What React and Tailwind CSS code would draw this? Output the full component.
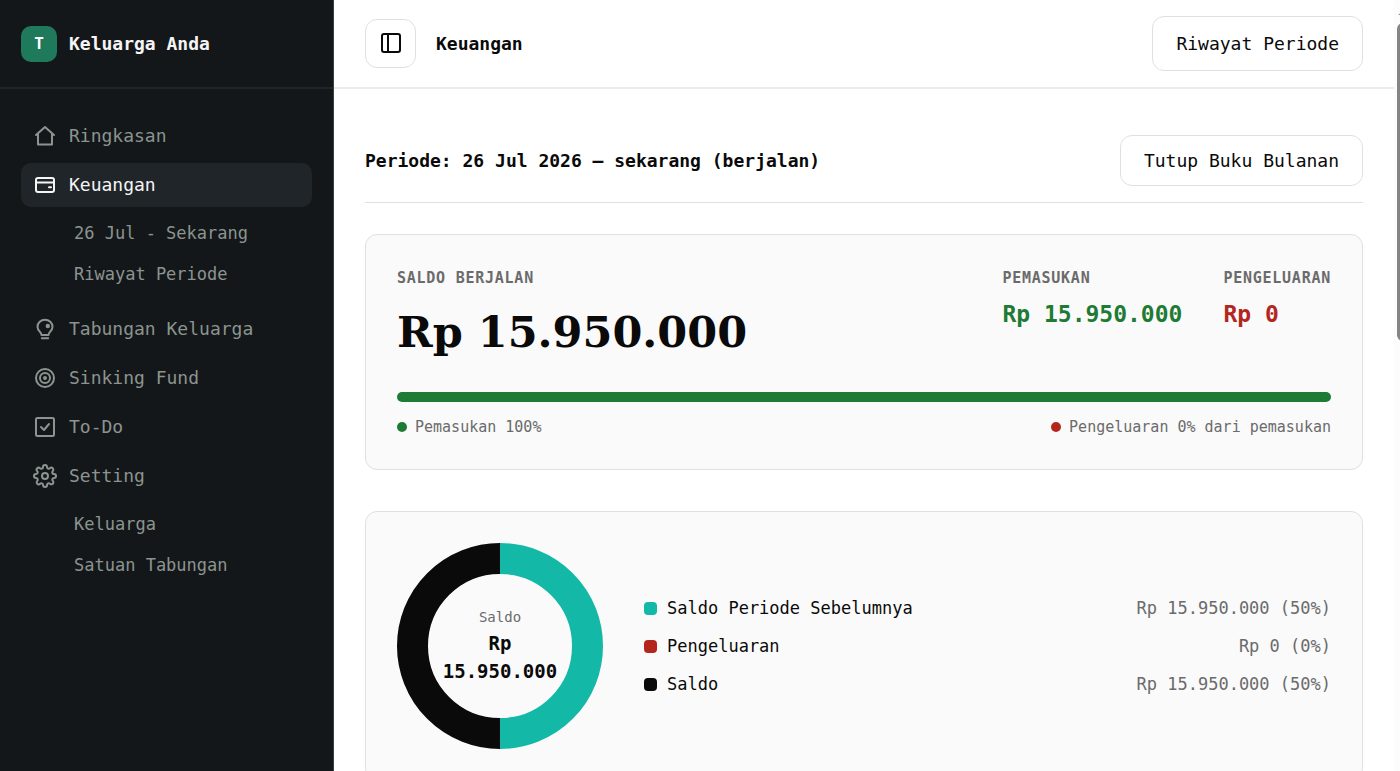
import React from "react";

const navItems = [
  { label: "Ringkasan", icon: "home" },
  {
    label: "Keuangan",
    icon: "wallet",
    active: true,
    children: ["26 Jul - Sekarang", "Riwayat Periode"],
  },
  { label: "Tabungan Keluarga", icon: "bulb" },
  { label: "Sinking Fund", icon: "target" },
  { label: "To-Do", icon: "todo" },
  { label: "Setting", icon: "gear", children: ["Keluarga", "Satuan Tabungan"] },
];

const legend = [
  { label: "Saldo Periode Sebelumnya", value: "Rp 15.950.000 (50%)", color: "bg-[#14b8a6]" },
  { label: "Pengeluaran", value: "Rp 0 (0%)", color: "bg-[#b3261e]" },
  { label: "Saldo", value: "Rp 15.950.000 (50%)", color: "bg-[#0a0a0a]" },
];

const icons = {
  home: <path d="M3 11 12 3l9 8M5 9.500V20.500h14V9.500" />,
  wallet: (
    <>
      <rect x="3" y="5" width="18" height="14" rx="2" />
      <path d="M3 9.500h18M16 14.200h2" />
    </>
  ),
  bulb: (
    <>
      <path d="M8.500 18c0-3-4-4-4-8.300a7.500 7 0 0 1 15 0c0 4.300-4 5.300-4 8.300zM8.800 21.300h6.400" />
      <circle cx="14.800" cy="9" r="1.2" fill="currentColor" />
    </>
  ),
  target: (
    <>
      <circle cx="12" cy="12" r="9" />
      <circle cx="12" cy="12" r="5" />
      <circle cx="12" cy="12" r="1" fill="currentColor" />
    </>
  ),
  todo: (
    <>
      <rect x="3" y="3" width="18" height="18" rx="1.5" />
      <path d="m8 12 3 3 5-6" />
    </>
  ),
  gear: (
    <>
      <circle cx="12" cy="12" r="3" />
      <path d="M19.400 15a1.650 1.650 0 0 0 .33 1.820l.06.06a2 2 0 1 1-2.830 2.830l-.06-.06a1.650 1.650 0 0 0-1.820-.33 1.650 1.650 0 0 0-1 1.510V21a2 2 0 0 1-4 0v-.09A1.650 1.650 0 0 0 9 19.400a1.650 1.650 0 0 0-1.820.33l-.06.06a2 2 0 1 1-2.830-2.830l.06-.06a1.650 1.650 0 0 0 .33-1.820 1.650 1.650 0 0 0-1.510-1H3a2 2 0 0 1 0-4h.09A1.650 1.650 0 0 0 4.600 9a1.650 1.650 0 0 0-.33-1.820l-.06-.06a2 2 0 1 1 2.830-2.830l.06.06a1.650 1.650 0 0 0 1.820.33H9a1.650 1.650 0 0 0 1-1.510V3a2 2 0 0 1 4 0v.09a1.650 1.650 0 0 0 1 1.510 1.650 1.650 0 0 0 1.820-.33l.06-.06a2 2 0 1 1 2.830 2.830l-.06.06a1.650 1.650 0 0 0-.33 1.820V9a1.650 1.650 0 0 0 1.510 1H21a2 2 0 0 1 0 4h-.09a1.650 1.650 0 0 0-1.510 1z" />
    </>
  ),
  panel: (
    <>
      <rect x="3" y="3" width="18" height="18" rx="2" />
      <path d="M9 3v18" />
    </>
  ),
};

const Icon = ({ name }) => (
  <svg
    viewBox="0 0 24 24"
    className="size-6 shrink-0"
    fill="none"
    stroke="currentColor"
    strokeWidth="2"
    strokeLinecap="round"
    strokeLinejoin="round"
    aria-hidden="true"
  >
    {icons[name]}
  </svg>
);

const Sidebar = () => (
  <aside className="flex w-[334px] shrink-0 flex-col border-r border-[#3a3f42] bg-[#14171a]">
    <div className="flex h-[89px] items-center gap-3 border-b-2 border-[#202529] px-[21px]">
      <div className="flex size-9 items-center justify-center rounded-[10px] bg-[#1f7a5c] text-base font-bold text-white">
        T
      </div>
      <span className="text-lg font-bold text-[#f5f5f5]">Keluarga Anda</span>
    </div>
    <nav className="px-[21px] pt-[25px]">
      <ul className="flex flex-col gap-[5px]">
        {navItems.map((item) => (
          <li key={item.label}>
            <a
              href="#"
              className={`flex h-11 items-center gap-3 rounded-[10px] px-3 text-lg ${
                item.active ? "bg-[#202529] text-[#f5f5f5]" : "text-[#8b948f]"
              }`}
            >
              <Icon name={item.icon} />
              {item.label}
            </a>
            {item.children && (
              <ul className="flex flex-col gap-[5px] pt-[9px] pb-[9px]">
                {item.children.map((child) => (
                  <li key={child}>
                    <a
                      href="#"
                      className="flex h-9 items-center pl-[53px] text-[17px] text-[#8b948f]"
                    >
                      {child}
                    </a>
                  </li>
                ))}
              </ul>
            )}
          </li>
        ))}
      </ul>
    </nav>
  </aside>
);

const Header = () => (
  <header className="flex h-[89px] shrink-0 items-center justify-between border-b-2 border-[#ebebeb] px-[31px]">
    <div className="flex items-center gap-5">
      <button
        type="button"
        aria-label="Sidebar"
        className="flex h-[49px] w-[51px] items-center justify-center rounded-xl border border-[#e0e0e0] pb-[2px]"
      >
        <Icon name="panel" />
      </button>
      <h1 className="text-lg font-bold">Keuangan</h1>
    </div>
    <button type="button" className="h-[55px] rounded-xl border border-[#e0e0e0] px-[23px] text-lg">
      Riwayat Periode
    </button>
  </header>
);

const Stat = ({ label, value, color }) => (
  <div>
    <p className="text-[15px] leading-6 font-bold tracking-wider text-[#6b6b6b]">{label}</p>
    <p className={`mt-2 text-[23px] leading-8 font-bold ${color}`}>{value}</p>
  </div>
);

const BalanceCard = () => (
  <section className="mt-[31px] rounded-xl border border-[#e0e0e0] bg-[#fafafa] px-[31px] pt-[31px] pb-[30px]">
    <div className="flex items-start justify-between">
      <div>
        <p className="text-[15px] leading-6 font-bold tracking-wider text-[#6b6b6b]">
          SALDO BERJALAN
        </p>
        <p className="mt-3 font-['DejaVu_Serif',serif] text-[43px] leading-[60px] font-bold">
          Rp 15.950.000
        </p>
      </div>
      <div className="flex gap-[41px]">
        <Stat label="PEMASUKAN" value="Rp 15.950.000" color="text-[#1e7b34]" />
        <Stat label="PENGELUARAN" value="Rp 0" color="text-[#b3261e]" />
      </div>
    </div>
    <div className="mt-[30px] h-[10px] overflow-hidden rounded-full bg-[#e5e5e5]">
      <div className="h-full bg-[#1e7b34]" style={{ width: "100%" }} />
    </div>
    <div className="mt-[13px] flex justify-between text-[15px] leading-6 text-[#6b6b6b]">
      <span className="flex items-center gap-2">
        <span className="size-[10px] rounded-full bg-[#1e7b34]" />
        Pemasukan 100%
      </span>
      <span className="flex items-center gap-2">
        <span className="size-[10px] rounded-full bg-[#b3261e]" />
        Pengeluaran 0% dari pemasukan
      </span>
    </div>
  </section>
);

const BreakdownCard = () => (
  <section className="mt-[41px] flex items-center gap-[41px] rounded-xl border border-[#e0e0e0] bg-[#fafafa] p-[31px]">
    <div className="relative size-[206px] shrink-0">
      <svg viewBox="0 0 206 206" className="size-full" fill="none" strokeWidth="31">
        <path d="M103 15.500a87.500 87.500 0 0 1 0 175" stroke="#14b8a6" />
        <path d="M103 190.500a87.500 87.500 0 0 1 0-175" stroke="#0a0a0a" />
      </svg>
      <div className="absolute inset-0 flex flex-col items-center justify-center px-10 pb-[3px] text-center">
        <p className="text-sm leading-6 text-[#6b6b6b]">Saldo</p>
        <p className="text-[19px] leading-7 font-bold">Rp 15.950.000</p>
      </div>
    </div>
    <ul className="flex flex-1 flex-col gap-3">
      {legend.map((row) => (
        <li key={row.label} className="flex items-center justify-between text-[17px] leading-[26px]">
          <span className="flex items-center gap-[10px]">
            <span className={`size-[13px] rounded-[4px] ${row.color}`} />
            {row.label}
          </span>
          <span className="text-[#6b6b6b]">{row.value}</span>
        </li>
      ))}
    </ul>
  </section>
);

const App = () => {
  return (
    <div className="flex h-screen overflow-hidden bg-white font-['DejaVu_Sans_Mono',monospace] text-[#0a0a0a]">
      <Sidebar />
      <div className="flex min-w-0 flex-1 flex-col">
        <Header />
        <main className="min-h-0 flex-1 overflow-hidden px-[31px] pt-[46px]">
          <div className="flex items-center justify-between border-b border-[#e0e0e0] pb-4">
            <h2 className="text-lg font-bold">Periode: 26 Jul 2026 – sekarang (berjalan)</h2>
            <button
              type="button"
              className="h-[51px] rounded-xl border border-[#e0e0e0] px-[23px] text-lg"
            >
              Tutup Buku Bulanan
            </button>
          </div>
          <BalanceCard />
          <BreakdownCard />
        </main>
      </div>
      <div className="flex w-[6px] shrink-0 flex-col overflow-hidden bg-[#fcfcfc] pt-[11px] pl-[3px]">
        <svg viewBox="0 0 12 5" className="h-1 w-3 shrink-0" aria-hidden="true">
          <path d="M0 5 6 0l6 5z" fill="#858585" />
        </svg>
        <div className="mt-2 h-[318px] w-3 shrink-0 rounded-full bg-[#858585]" />
      </div>
    </div>
  );
};

export default App;
